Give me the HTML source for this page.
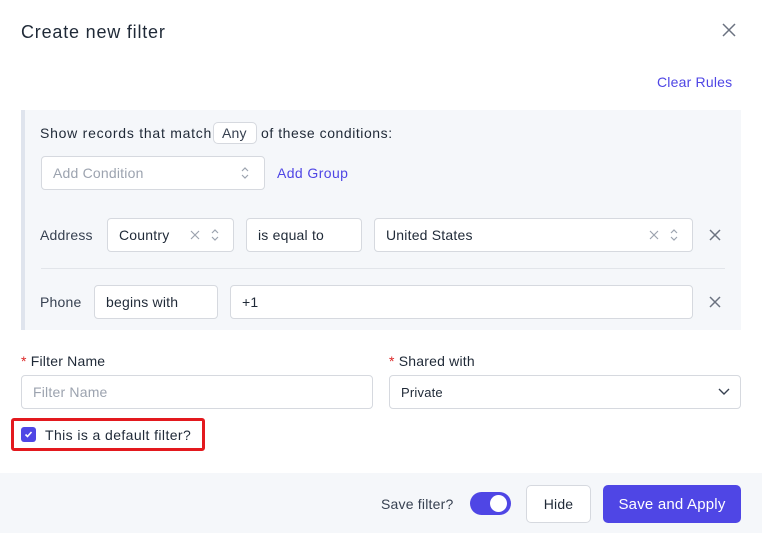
<!DOCTYPE html>
<html><head><style>
*{box-sizing:border-box;margin:0;padding:0}
body{width:762px;height:533px;background:#fff;font-family:"Liberation Sans",sans-serif;color:#374151;position:relative;overflow:hidden;font-size:14px;letter-spacing:0.2px}
.a{position:absolute}
.box{position:absolute;border:1px solid #d6d9df;border-radius:4px;background:#fff;font-size:14px;color:#1f2937;padding-left:11px;display:flex;align-items:center}
</style></head><body>
<div class="a" style="left:21px;top:22px;font-size:18px;color:#1f2937;letter-spacing:0.8px">Create new filter</div>
<svg class="a" style="left:722px;top:23px" width="14" height="14" viewBox="0 0 14 14"><path d="M1 1L13 13M13 1L1 13" stroke="#6b7280" stroke-width="1.5"/></svg>
<div class="a" style="left:657px;top:74px;color:#4f46e5;font-size:14px">Clear Rules</div>

<div class="a" style="left:21px;top:110px;width:720px;height:220px;background:#f5f7fa;border-left:4px solid #dfe4ed"></div>
<div class="a" style="left:40px;top:125px;font-size:14px;color:#1f2937;letter-spacing:0.75px">Show records that match</div>
<div class="box" style="left:213px;top:122px;width:44px;height:22px;padding-left:8px;border-radius:5px;color:#374151">Any</div>
<div class="a" style="left:261px;top:125px;color:#1f2937;letter-spacing:0.55px">of these conditions:</div>

<div class="box" style="left:41px;top:156px;width:224px;height:34px;color:#9ca3af">Add Condition</div>
<svg class="a" style="left:241px;top:167px" width="8" height="12" viewBox="0 0 8 12"><path d="M1 4L4 1L7 4M1 8L4 11L7 8" stroke="#9ca3af" fill="none" stroke-width="1.2"/></svg>
<div class="a" style="left:277px;top:165px;color:#4f46e5;letter-spacing:0.4px">Add Group</div>

<div class="a" style="left:40px;top:227px;color:#374151">Address</div>
<div class="box" style="left:107px;top:218px;width:127px;height:34px">Country</div>
<svg class="a" style="left:190px;top:230px" width="10" height="10" viewBox="0 0 10 10"><path d="M1 1L9 9M9 1L1 9" stroke="#9ca3af" stroke-width="1.2"/></svg>
<svg class="a" style="left:211px;top:229px" width="8" height="12" viewBox="0 0 8 12"><path d="M1 4L4 1L7 4M1 8L4 11L7 8" stroke="#9ca3af" fill="none" stroke-width="1.2"/></svg>
<div class="box" style="left:246px;top:218px;width:116px;height:34px">is equal to</div>
<div class="box" style="left:374px;top:218px;width:319px;height:34px">United States</div>
<svg class="a" style="left:649px;top:230px" width="10" height="10" viewBox="0 0 10 10"><path d="M1 1L9 9M9 1L1 9" stroke="#9ca3af" stroke-width="1.2"/></svg>
<svg class="a" style="left:670px;top:229px" width="8" height="12" viewBox="0 0 8 12"><path d="M1 4L4 1L7 4M1 8L4 11L7 8" stroke="#9ca3af" fill="none" stroke-width="1.2"/></svg>
<svg class="a" style="left:709px;top:229px" width="12" height="12" viewBox="0 0 12 12"><path d="M1 1L11 11M11 1L1 11" stroke="#6b7280" stroke-width="1.5"/></svg>
<div class="a" style="left:41px;top:268px;width:684px;height:1px;background:#e2e5ea"></div>

<div class="a" style="left:40px;top:294px">Phone</div>
<div class="box" style="left:94px;top:285px;width:124px;height:34px">begins with</div>
<div class="box" style="left:230px;top:285px;width:463px;height:34px">+1</div>
<svg class="a" style="left:709px;top:296px" width="12" height="12" viewBox="0 0 12 12"><path d="M1 1L11 11M11 1L1 11" stroke="#6b7280" stroke-width="1.5"/></svg>

<div class="a" style="left:21px;top:353px;color:#1f2937"><span style="color:#dc2626">*</span> Filter Name</div>
<div class="a" style="left:389px;top:353px;color:#1f2937"><span style="color:#dc2626">*</span> Shared with</div>
<div class="box" style="left:21px;top:375px;width:352px;height:34px;color:#9ca3af">Filter Name</div>
<div class="box" style="left:389px;top:375px;width:352px;height:34px;font-size:13px">Private</div>
<svg class="a" style="left:718px;top:388px" width="12" height="8" viewBox="0 0 12 8"><path d="M1 1L6 6L11 1" stroke="#374151" fill="none" stroke-width="1.4"/></svg>

<div class="a" style="left:11px;top:418px;width:194px;height:33px;border:3px solid #e3191e;border-radius:3px"></div>
<div class="a" style="left:21px;top:427px;width:15px;height:15px;background:#4f46e5;border-radius:3px"></div>
<svg class="a" style="left:23px;top:429px" width="11" height="11" viewBox="0 0 11 11"><path d="M2.5 5.5L4.5 7.5L8.5 3" stroke="#fff" fill="none" stroke-width="1.6"/></svg>
<div class="a" style="left:45px;top:427px;color:#1f2937;letter-spacing:0.4px">This is a default filter?</div>

<div class="a" style="left:0;top:473px;width:762px;height:60px;background:#f5f7fa"></div>
<div class="a" style="left:381px;top:496px;color:#374151">Save filter?</div>
<div class="a" style="left:470px;top:492px;width:41px;height:23px;background:#4f46e5;border-radius:12px"></div>
<div class="a" style="left:490px;top:495px;width:17px;height:17px;background:#fff;border-radius:50%"></div>
<div class="a" style="left:526px;top:485px;width:65px;height:38px;border:1px solid #d6d9df;border-radius:5px;background:#fff;display:flex;align-items:center;justify-content:center;color:#1f2937">Hide</div>
<div class="a" style="left:603px;top:485px;width:138px;height:38px;background:#4f46e5;border-radius:5px;display:flex;align-items:center;justify-content:center;color:#fff;font-size:15px">Save and Apply</div>
</body></html>
